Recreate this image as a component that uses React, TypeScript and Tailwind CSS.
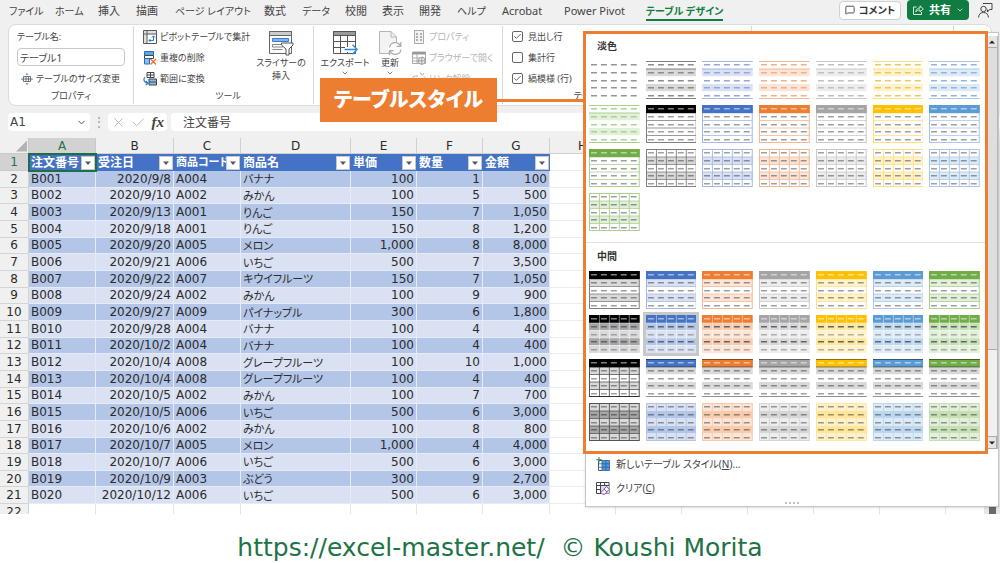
import { Check, ChevronDown, MessageSquare, X } from "lucide-react";
import type { ReactNode } from "react";

const tabs = [
  { name: "ファイル", style: "w-[46px] text-[10px]" },
  { name: "ホーム", style: "w-[43px] text-[10px]" },
  { name: "挿入", style: "w-[38px] text-[11px]" },
  { name: "描画", style: "w-[39px] text-[11px]" },
  { name: "ページ レイアウト", style: "w-[89px] text-[10px]" },
  { name: "数式", style: "w-[38px] text-[11px]" },
  { name: "データ", style: "w-[43px] text-[10px]" },
  { name: "校閲", style: "w-[37px] text-[11px]" },
  { name: "表示", style: "w-[37px] text-[11px]" },
  { name: "開発", style: "w-[38px] text-[11px]" },
  { name: "ヘルプ", style: "w-[45px] text-[10px]" },
  { name: "Acrobat", style: "w-[62px] text-[11px]" },
  { name: "Power Pivot", style: "w-[82px] text-[11px]" },
];

const columns = [
  { letter: "A", title: "注文番号", width: "w-[67px]" },
  { letter: "B", title: "受注日", width: "w-[78px]" },
  { letter: "C", title: "商品コード", width: "w-[67px]" },
  { letter: "D", title: "商品名", width: "w-[110px]" },
  { letter: "E", title: "単価", width: "w-[66px]" },
  { letter: "F", title: "数量", width: "w-[66px]" },
  { letter: "G", title: "金額", width: "w-[67px]" },
];

const emptyColumns = ["H", "I", "J", "K", "L", "M", "N"];

const orders = [
  ["B001", "2020/9/8", "A004", "バナナ", "100", "1", "100"],
  ["B002", "2020/9/10", "A002", "みかん", "100", "5", "500"],
  ["B003", "2020/9/13", "A001", "りんご", "150", "7", "1,050"],
  ["B004", "2020/9/18", "A001", "りんご", "150", "8", "1,200"],
  ["B005", "2020/9/20", "A005", "メロン", "1,000", "8", "8,000"],
  ["B006", "2020/9/21", "A006", "いちご", "500", "7", "3,500"],
  ["B007", "2020/9/22", "A007", "キウイフルーツ", "150", "7", "1,050"],
  ["B008", "2020/9/24", "A002", "みかん", "100", "9", "900"],
  ["B009", "2020/9/27", "A009", "パイナップル", "300", "6", "1,800"],
  ["B010", "2020/9/28", "A004", "バナナ", "100", "4", "400"],
  ["B011", "2020/10/2", "A004", "バナナ", "100", "4", "400"],
  ["B012", "2020/10/4", "A008", "グレープフルーツ", "100", "10", "1,000"],
  ["B013", "2020/10/4", "A008", "グレープフルーツ", "100", "4", "400"],
  ["B014", "2020/10/5", "A002", "みかん", "100", "7", "700"],
  ["B015", "2020/10/5", "A006", "いちご", "500", "6", "3,000"],
  ["B016", "2020/10/6", "A002", "みかん", "100", "8", "800"],
  ["B017", "2020/10/7", "A005", "メロン", "1,000", "4", "4,000"],
  ["B018", "2020/10/7", "A006", "いちご", "500", "6", "3,000"],
  ["B019", "2020/10/9", "A003", "ぶどう", "300", "9", "2,700"],
  ["B020", "2020/10/12", "A006", "いちご", "500", "6", "3,000"],
];

type Palette = { base: string; mid: string; light: string; line: string; dash: string };

const palettes: Palette[] = [
  { base: "#000000", mid: "#a6a6a6", light: "#d9d9d9", line: "#7f7f7f", dash: "#8c8c8c" },
  { base: "#4472c4", mid: "#b4c6e7", light: "#d9e1f2", line: "#a3b9e3", dash: "#93a9d6" },
  { base: "#ed7d31", mid: "#f8cbad", light: "#fce4d6", line: "#f5b792", dash: "#f0b08a" },
  { base: "#a5a5a5", mid: "#d6d6d6", light: "#ededed", line: "#c9c9c9", dash: "#c0c0c0" },
  { base: "#ffc000", mid: "#ffe699", light: "#fff2cc", line: "#ffdf80", dash: "#ecc95f" },
  { base: "#5b9bd5", mid: "#bdd7ee", light: "#ddebf7", line: "#a9c8ec", dash: "#94b4e0" },
  { base: "#70ad47", mid: "#c6e0b4", light: "#e2efda", line: "#a9d08e", dash: "#acd094" },
];

type Kind = "plain" | "lines" | "header" | "grid" | "banded" | "tiles" | "ruled" | "filled";

const repeat = (kind: Kind) => palettes.map((palette) => ({ kind, palette }));

const lightStyles = [
  { kind: "plain" as Kind, palette: palettes[0] },
  ...repeat("lines"),
  ...repeat("header"),
  ...repeat("grid"),
];

const mediumStyles = [
  ...repeat("banded"),
  ...repeat("tiles"),
  ...repeat("ruled"),
  ...repeat("filled"),
];

const rowTops = [0, 8, 15.5, 23, 30.5];
const rowHeights = [8, 7.5, 7.5, 7.5, 7.5];

const StyleThumb = ({ kind, palette }: { kind: Kind; palette: Palette }) => {
  const { base, mid, light, line, dash } = palette;
  const isBlack = base === "#000000";
  const hasHeader = ["header", "banded", "tiles", "ruled"].includes(kind);

  const fill = (row: number) => {
    const odd = row % 2 === 1;
    if (row === 0 && hasHeader) return base;
    if (kind === "plain" || kind === "header") return "#ffffff";
    if (kind === "ruled") return odd ? "#d9d9d9" : "#ffffff";
    if (kind === "tiles" || kind === "filled") return odd ? mid : light;
    return odd ? light : "#ffffff";
  };
  const dashColor = (row: number) => {
    if (row === 0 && hasHeader) return "#ffffff80";
    if (kind === "lines") return dash;
    if (kind === "tiles") return row % 2 === 1 ? "#5f6470" : "#00000045";
    return kind === "plain" ? "#959595" : "#00000060";
  };

  const horizontal = kind === "header" || kind === "grid" || kind === "banded";
  const vertical =
    kind === "grid" || kind === "tiles" || kind === "filled" || (kind === "ruled" && isBlack);
  const strong = isBlack && (kind === "ruled" || kind === "filled");
  const stroke = kind === "tiles" ? "#ffffff80" : strong ? "#555555" : kind === "filled" ? mid : line;

  return (
    <svg viewBox="0 0 51 38" preserveAspectRatio="none" className="block h-full w-full">
      {rowTops.map((top, row) => (
        <rect key={row} x="0" y={top} width="51" height={rowHeights[row]} fill={fill(row)} />
      ))}
      {(horizontal || kind === "tiles" || strong) &&
        rowTops.slice(1).map((top) => (
          <path key={top} d={`M0 ${top}H51`} stroke={stroke} strokeWidth="0.8" />
        ))}
      {vertical &&
        [10.5, 20.5, 30.5, 40.5].map((x) => (
          <path key={x} d={`M${x} 0V38`} stroke={stroke} strokeWidth="0.9" />
        ))}
      {(horizontal || kind === "filled" || strong) && (
        <rect x="0.5" y="0.5" width="50" height="37" fill="none" stroke={stroke} />
      )}
      {hasHeader && kind !== "tiles" && <rect width="51" height="8" fill={base} />}
      {kind === "lines" && <path d="M0 .5H51M0 8H51M0 37.5H51" stroke={line} />}
      {kind === "ruled" && <path d="M0 .5H51M0 8H51M0 37.5H51" stroke="#00000070" />}
      {rowTops.map((top, row) =>
        [2, 12, 22, 32, 42].map((x) => (
          <rect
            key={`${row}-${x}`}
            x={x}
            y={Math.round(top + 3)}
            width="6"
            height="1.5"
            fill={dashColor(row)}
          />
        ))
      )}
    </svg>
  );
};

const StyleSection = (props: {
  title: string;
  styles: { kind: Kind; palette: Palette }[];
  selected?: number;
}) => {
  const { title, styles, selected } = props;
  return (
    <section className="pt-[7px] pb-[11px] pl-[3px] pr-[6px]">
      <h2 className="pl-2 text-[10px] leading-3 font-bold text-[#333]">{title}</h2>
      <div className="mt-[9px] grid grid-cols-7 gap-[6px]">
        {styles.map((style, i) => (
          <button
            key={i}
            type="button"
            aria-label={`${title} ${i + 1}`}
            className={
              i === selected
                ? "h-[38px] outline-3 outline-[#c8c8c8]"
                : "h-[38px]"
            }
          >
            <StyleThumb kind={style.kind} palette={style.palette} />
          </button>
        ))}
      </div>
    </section>
  );
};

const ResizeIcon = () => (
  <svg viewBox="0 0 12 12" className="h-3 w-3 shrink-0" fill="none">
    <path d="M2.500 3.500h7v5h-7zM2.500 6h7M5 3.500v5M7.500 3.500v5" stroke="#555" strokeWidth=".8" />
    <path d="M6 0l1.500 1.800h-3zM6 12l1.500-1.800h-3zM0 6.200l1.600-1.400v2.800zM12 6.200l-1.600-1.400v2.800z" fill="#2b88d8" />
  </svg>
);

const PivotIcon = () => (
  <svg viewBox="0 0 14 14" className="h-[14px] w-[14px] shrink-0" fill="none">
    <path d="M.5.5h13v13H.5zM.5 4h13M4 .5v13" stroke="#555" />
    <path d="M.5.5h13V4H4v9.500H.5z" fill="#8884" />
    <path d="M6 10.500h4.500V6M8.800 7.500L10.500 5.800 12.200 7.500M7.500 9L6 10.500 7.500 12" stroke="#2b7cd3" />
  </svg>
);

const DuplicateIcon = () => (
  <svg viewBox="0 0 14 14" className="h-[14px] w-[14px] shrink-0" fill="none">
    <path d="M1.500.5h9v4h-9z" fill="#5ea3e6" stroke="#2b6cb0" />
    <path d="M1.500 4.500h9v3h-9z" fill="#fff" stroke="#444" />
    <path d="M1.500 7.500h5v5.500h-5z" fill="#8bbcec" stroke="#2b6cb0" />
    <path d="M7.500 8l5.500 5.500M13 8l-5.500 5.500" stroke="#ed6a2c" strokeWidth="1.2" />
  </svg>
);

const RangeIcon = () => (
  <svg viewBox="0 0 14 14" className="h-[14px] w-[14px] shrink-0" fill="none">
    <path d="M4 .5h7v5H4zM4 3h7M7.500.5v5" stroke="#444" />
    <path d="M6 7h7.500v6H6z" fill="#8bbcec" stroke="#444" />
    <path d="M6 10h7.500" stroke="#444" />
    <path d="M2 5C0 7.500 1 10.500 4.500 11.200M3 9l2 2.300-2.200 1.700" stroke="#2b7cd3" strokeWidth="1.2" />
  </svg>
);

const SlicerIcon = () => (
  <svg viewBox="0 0 26 26" className="h-[26px] w-[26px]" fill="none">
    <path d="M1.500 1.500h22v22h-22z" fill="#fafafa" stroke="#666" />
    <path d="M1.500 1.500h22v4h-22z" fill="#ccc" stroke="#666" />
    <path d="M4.500 8.500h16v3h-16z" fill="#7db4ea" stroke="#3b80c6" />
    <path d="M4.500 14.500h10v2.500h-10zM4.500 19.500h10" fill="#fff" stroke="#888" />
    <path d="M13.500 13h11.500v2l-4 4v6h-3v-6l-4.500-4z" fill="#fff" stroke="#555" />
  </svg>
);

const ExportIcon = () => (
  <svg viewBox="0 0 26 26" className="h-[26px] w-[26px]" fill="none">
    <path d="M1.500 1.500h22v22h-22z" fill="#fff" stroke="#555" />
    <path d="M1.500 1.500h22v4h-22z" fill="#9a9a9a" stroke="#555" />
    <path d="M1.500 11.500h22M1.500 17.500h22M8.500 5v18M15.500 5v18" stroke="#555" />
    <path d="M13 17h13v5H13z" fill="#fff" />
    <path d="M12.500 19.500H25M20.500 14.800l4.700 4.700-4.700 4.700" stroke="#2b88d8" strokeWidth="1.3" />
  </svg>
);

const RefreshIcon = () => (
  <svg viewBox="0 0 26 26" className="h-[26px] w-[26px]" fill="none">
    <path d="M2.500 1.500H14l5.500 5.500V23.500h-17z" fill="#f3f3f3" stroke="#b5b5b5" />
    <path d="M14 1.500v5.500h5.500" stroke="#b5b5b5" />
    <circle cx="18" cy="18.500" r="7" fill="#fff" />
    <path d="M12.500 17.500a5.800 5.800 0 0 1 11-1.500M24 19.500a5.800 5.800 0 0 1-11 1.500M23.800 12v4.300h-4.300M12.500 25v-4.300h4.300" stroke="#aaa" strokeWidth="1.2" />
  </svg>
);

const PropertyIcon = () => (
  <svg viewBox="0 0 14 14" className="h-[14px] w-[14px] shrink-0" fill="none">
    <path d="M2.500.5h9v13h-9z" fill="#f3f3f3" stroke="#aaa" />
    <path d="M4 4h2M8 4h2M4 7h2M8 7h2M4 10h2M8 10h2" stroke="#999" strokeWidth="1.5" />
  </svg>
);

const BrowserIcon = () => (
  <svg viewBox="0 0 14 14" className="h-[14px] w-[14px] shrink-0" fill="none">
    <path d="M.5 1h13v11.500H.5z" stroke="#aaa" />
    <path d="M.5 1h13v2.500H.5z" fill="#999" />
    <path d="M.5 7h7M.5 10h6M5 3v9.500" stroke="#aaa" />
    <circle cx="9.800" cy="9.800" r="3.500" fill="#eee" stroke="#999" />
    <path d="M6.300 9.800h7M9.800 6.300v7" stroke="#999" />
  </svg>
);

const UnlinkIcon = () => (
  <svg viewBox="0 0 14 14" className="h-[14px] w-[14px] shrink-0" fill="none">
    <path d="M6 4H3.500a3 3 0 0 0 0 6H6M8 10h2.500a3 3 0 0 0 1.500-5.500M8.500.5l1 2.500M12 1l-1.500 2.500" stroke="#aaa" />
  </svg>
);

const ShareIcon = () => (
  <svg viewBox="0 0 12 12" className="h-3 w-3" fill="none" stroke="#d9efe0">
    <path d="M4.500 3H1.500v7.500h8V8" />
    <path d="M3.800 7.800c.4-2.600 2-3.800 4.200-3.800V1.800L11.300 5 8 7.800V6C6 6 4.800 6.600 3.800 7.800z" />
  </svg>
);

const PresenceIcon = () => (
  <svg viewBox="0 0 16 16" className="h-4 w-4" fill="none" stroke="#444">
    <path d="M6 1.500h9v6h-2.500L10.500 10V7.500" />
    <circle cx="6.500" cy="7" r="2.700" fill="#f0f0f0" />
    <path d="M1.500 15.500c.3-3.300 2-5 5-5s4.700 1.700 5 5" />
  </svg>
);

const NewStyleIcon = () => (
  <svg viewBox="0 0 14 14" className="h-[14px] w-[14px] shrink-0" fill="none">
    <path d="M2.500 3.500h11v10h-11z" fill="#fff" stroke="#555" />
    <path d="M6 3.500h7.500v10H6z" fill="#4a9be8" />
    <path d="M2.500 6.800h11M2.500 10.200h11M6 3.500v10M9.800 3.500v10" stroke="#265f9c" strokeWidth=".8" />
    <path d="M3 0v5.500M.2 2.700h5.600" stroke="#2e8b57" />
  </svg>
);

const ClearIcon = () => (
  <svg viewBox="0 0 14 14" className="h-[14px] w-[14px] shrink-0" fill="none">
    <path d="M.5 1.500h12.500v11H.5zM.5 4.500H13M.5 8.500h8M4.500 1v11.500M8.500 1v6" stroke="#444" />
    <path d="M5 5h8v7.500H5z" fill="#cfe3f7" />
    <path d="M10.500 5.500l3 2.700-4.800 5H6.500L5 11.500zM8 8.200l3 2.700" fill="#fff" stroke="#8a4ba8" />
  </svg>
);

const ToolButton = (props: { icon: ReactNode; name: string; disabled?: boolean }) => (
  <button
    type="button"
    disabled={props.disabled}
    className="flex h-[21px] items-center gap-[3px] text-left text-[#444] disabled:text-[#b5b5b5]"
  >
    {props.icon}
    {props.name}
  </button>
);

const CheckOption = ({ name, checked }: { name: string; checked?: boolean }) => (
  <label className="flex h-[21px] items-center gap-[5px]">
    <span className="grid h-[11px] w-[11px] place-items-center">
      <input
        type="checkbox"
        defaultChecked={checked}
        className="peer col-start-1 row-start-1 h-[11px] w-[11px] appearance-none rounded-xs border border-[#666] bg-white"
      />
      <Check
        size={9}
        className="pointer-events-none invisible col-start-1 row-start-1 text-[#333] peer-checked:visible"
      />
    </span>
    {name}
  </label>
);

const RibbonGroup = (props: { title?: string; className: string; children: ReactNode }) => (
  <div className={`my-px flex shrink-0 flex-col justify-between border-r border-[#d9d9d9] pb-[2px] ${props.className}`}>
    <div className="flex">{props.children}</div>
    <div className="text-center leading-3">{props.title}</div>
  </div>
);

const Ribbon = () => (
  <div className="mx-2 flex h-[82px] overflow-hidden rounded-lg border border-[#dcdcdc] bg-white text-[9px] whitespace-nowrap text-[#444]">
    <RibbonGroup title="プロパティ" className="w-[125px] px-2">
      <div className="flex w-full flex-col">
        <label htmlFor="table-name" className="flex h-[22px] items-center">
          テーブル名:
        </label>
        <input
          id="table-name"
          defaultValue="テーブル1"
          className="h-[18px] w-full rounded-sm border border-[#c8c8c8] px-[2px] text-[10px]"
        />
        <div className="pt-[2px] pl-1">
          <ToolButton icon={<ResizeIcon />} name="テーブルのサイズ変更" />
        </div>
      </div>
    </RibbonGroup>
    <RibbonGroup title="ツール" className="w-[180px] pl-[9px]">
      <div className="flex w-[107px] flex-col">
        <ToolButton icon={<PivotIcon />} name="ピボットテーブルで集計" />
        <ToolButton icon={<DuplicateIcon />} name="重複の削除" />
        <ToolButton icon={<RangeIcon />} name="範囲に変換" />
      </div>
      <button type="button" className="flex w-[62px] flex-col items-center pt-1 leading-[13px]">
        <SlicerIcon />
        スライサーの
        <br />
        挿入
      </button>
    </RibbonGroup>
    <RibbonGroup className="w-[189px] pl-1">
      <button type="button" className="flex w-[54px] flex-col items-center pt-1 leading-[13px]">
        <ExportIcon />
        エクスポート
        <ChevronDown size={8} />
      </button>
      <button type="button" className="flex w-[36px] flex-col items-center pt-1 leading-[13px]">
        <RefreshIcon />
        更新
        <ChevronDown size={8} />
      </button>
      <div className="flex flex-col pl-1">
        <ToolButton icon={<PropertyIcon />} name="プロパティ" disabled />
        <ToolButton icon={<BrowserIcon />} name="ブラウザーで開く" disabled />
        <ToolButton icon={<UnlinkIcon />} name="リンク解除" disabled />
      </div>
    </RibbonGroup>
    <RibbonGroup title="テーブル スタイルのオプション" className="w-[249px] pl-[9px]">
      <div className="flex flex-col">
        <CheckOption name="見出し行" checked />
        <CheckOption name="集計行" />
        <CheckOption name="縞模様 (行)" checked />
      </div>
    </RibbonGroup>
    <RibbonGroup className="w-[202px]">{null}</RibbonGroup>
  </div>
);

const TitleTabs = () => (
  <header className="flex h-6 items-center pl-[9px] text-[11px] whitespace-nowrap text-[#444]">
    <nav className="flex flex-1">
      {tabs.map((tab) => (
        <a key={tab.name} href="#" className={`${tab.style} shrink-0 leading-4`}>
          {tab.name}
        </a>
      ))}
      <a href="#" className="border-b-2 border-[#107c41] text-[10px] leading-4 font-bold text-[#107c41]">
        テーブル デザイン
      </a>
    </nav>
    <div className="flex items-center pr-[7px] pb-1 text-[10px] font-bold">
      <button type="button" className="flex h-[19px] w-[62px] items-center justify-center gap-1 rounded-sm border border-[#d0d0d0] bg-white text-[#333]">
        <MessageSquare size={10} />
        コメント
      </button>
      <button type="button" className="ml-[6px] flex h-[20px] w-[62px] items-center justify-between rounded-sm bg-[#107c41] px-[5px] text-[11px] text-white">
        <ShareIcon />
        共有
        <ChevronDown size={8} />
      </button>
      <button type="button" aria-label="共同編集者" className="ml-2">
        <PresenceIcon />
      </button>
    </div>
  </header>
);

const FormulaBar = () => (
  <div className="mt-[7px] mb-[7px] flex h-[18px] items-center pl-2 text-[12px] text-[#444]">
    <div className="flex h-full w-[82px] items-center rounded-sm bg-white pr-[3px]">
      <input
        aria-label="名前ボックス"
        defaultValue="A1"
        className="w-full min-w-0 px-[2px] font-['DejaVu_Sans',sans-serif]"
      />
      <ChevronDown size={11} className="shrink-0" />
    </div>
    <span className="w-[18px] text-center text-[#999]">⋮</span>
    <div className="flex h-full w-[59px] items-center justify-between rounded-sm bg-white px-[3px]">
      <X size={15} strokeWidth={1.5} className="text-[#b4b4b4]" />
      <Check size={15} strokeWidth={1.5} className="text-[#b4b4b4]" />
      <span className="font-['Liberation_Serif',serif] text-[15px] leading-4 font-bold italic">fx</span>
    </div>
    <input
      aria-label="数式バー"
      defaultValue="注文番号"
      className="ml-1 h-full min-w-0 flex-1 rounded-sm bg-white px-3"
    />
  </div>
);

const Sheet = () => (
  <main className="flex h-[376px] overflow-hidden bg-white">
    <table className="h-[381px] w-full min-w-0 table-fixed border-separate border-spacing-0 font-['DejaVu_Sans','Noto_Sans_CJK_JP',sans-serif] text-[12px] leading-[14px] text-[#2b2b2b]">
      <colgroup>
        <col className="w-[29px]" />
        {columns.map((column) => (
          <col key={column.letter} className={column.width} />
        ))}
        {emptyColumns.map((letter) => (
          <col key={letter} className={letter === "N" ? "" : "w-[66px]"} />
        ))}
      </colgroup>
      <thead>
        <tr className="h-4 bg-[#f0f0f0]">
          <th className="border-r border-b border-[#c8c8c8] p-0" aria-label="すべて選択">
            <svg viewBox="0 0 12 12" className="ml-auto h-3 w-3 pr-px">
              <path d="M12 0v12H0z" fill="#b4b4b4" />
            </svg>
          </th>
          {columns.map((column, i) => (
            <th
              key={column.letter}
              className={
                i === 0
                  ? "border-r border-b border-[#c8c8c8] bg-[#d2d2d2] p-0 font-normal text-[#217346]"
                  : "border-r border-b border-[#d0d0d0] p-0 font-normal"
              }
            >
              {column.letter}
            </th>
          ))}
          {emptyColumns.map((letter) => (
            <th key={letter} className="border-r border-b border-[#d0d0d0] p-0 font-normal">
              {letter}
            </th>
          ))}
        </tr>
      </thead>
      <tbody>
        <tr className="h-[17px] bg-[#4472c4]">
          <th className="border-r border-b border-[#c8c8c8] bg-[#d2d2d2] p-0 font-normal text-[#217346]">1</th>
          {columns.map((column, i) => (
            <th
              key={column.letter}
              className={
                i === 0
                  ? "relative p-0 outline-2 -outline-offset-1 outline-[#1d7044]"
                  : "p-0"
              }
            >
              <div className="flex items-center pl-[2px] text-left font-bold whitespace-nowrap text-white">
                <span className={column.letter === "C" ? "min-w-0 flex-1 text-[11px]" : "min-w-0 flex-1"}>
                  {column.title}
                </span>
                <button
                  type="button"
                  aria-label={`${column.title} フィルター`}
                  className="mr-px grid h-[14px] w-[14px] shrink-0 place-items-center border border-[#c8c8c8] bg-white"
                >
                  <svg viewBox="0 0 6 4" className="h-1 w-[6px]">
                    <path d="M0 .5h6L3 4z" fill="#555" />
                  </svg>
                </button>
              </div>
            </th>
          ))}
          {emptyColumns.map((letter) => (
            <td key={letter} className="border-r border-b border-[#ececec] bg-white p-0" />
          ))}
        </tr>
        {orders.map((order, row) => (
          <tr key={order[0]} className={row % 2 === 0 ? "bg-[#b4c6e7]" : "bg-[#d9e1f2]"}>
            <th className="border-r border-b border-[#d4d4d4] bg-[#f0f0f0] p-0 font-normal">{row + 2}</th>
            {order.map((value, i) => (
              <td
                key={i}
                className={
                  i === 1 || i > 3
                    ? "border-r border-b border-[#e6ecf7] py-0 pr-[2px] pl-0 text-right"
                    : i === 3
                      ? "border-r border-b border-[#e6ecf7] pt-[2px] pr-0 pb-0 pl-[2px] text-[11px] leading-[13px]"
                      : "border-r border-b border-[#e6ecf7] py-0 pr-0 pl-[2px]"
                }
              >
                {value}
              </td>
            ))}
            {emptyColumns.map((letter) => (
              <td key={letter} className="border-r border-b border-[#ececec] bg-white p-0" />
            ))}
          </tr>
        ))}
        <tr>
          <th className="border-r border-[#d4d4d4] bg-[#f0f0f0] p-0 font-normal">22</th>
          {[...columns.map((column) => column.letter), ...emptyColumns].map((letter) => (
            <td key={letter} className="border-r border-[#e4e4e4] p-0" />
          ))}
        </tr>
      </tbody>
    </table>
    <div className="flex w-[15px] shrink-0 items-end justify-center bg-[#e8e8e8]">
      <div className="h-2 w-[7px] bg-[#6b6b6b]" />
    </div>
  </main>
);

const ScrollBar = () => (
  <div className="mt-[3px] mb-[3px] flex w-3 flex-col border-r border-[#b8b8b8] bg-[#f0f0f0]">
    <button type="button" aria-label="上へ" className="grid h-3 place-items-center border-b border-[#aaa] bg-[#e6e6e6]">
      <svg viewBox="0 0 6 4" className="h-1 w-[6px]">
        <path d="M0 3.500h6L3 .5z" fill="#222" />
      </svg>
    </button>
    <div className="h-[302px] border-b border-[#aaa] bg-[#dedede]" />
    <button type="button" aria-label="下へ" className="mt-auto grid h-[13px] place-items-center border border-[#aaa] bg-[#e6e6e6]">
      <svg viewBox="0 0 6 4" className="h-1 w-[6px]">
        <path d="M0 .5h6L3 3.500z" fill="#222" />
      </svg>
    </button>
  </div>
);

const StyleGallery = () => (
  <div className="absolute top-[32px] left-[585px] w-[414px] border border-[#c6c6c6] bg-white text-[10px] text-[#444] shadow-sm">
    <div className="relative flex">
      <div className="min-w-0 flex-1">
        <StyleSection title="淡色" styles={lightStyles} />
        <div className="border-t border-[#e1e1e1]" />
        <StyleSection title="中間" styles={mediumStyles} selected={8} />
      </div>
      <ScrollBar />
      <div className="pointer-events-none absolute -inset-y-[2px] right-[10px] -left-[3px] border-3 border-[#ed7d31]" />
    </div>
    <button type="button" className="flex h-6 w-full items-center gap-[6px] pl-[10px]">
      <NewStyleIcon />
      <span>
        新しいテーブル スタイル(<u>N</u>)...
      </span>
    </button>
    <button type="button" className="flex h-6 w-full items-center gap-[6px] pl-[10px]">
      <ClearIcon />
      <span>
        クリア(<u>C</u>)
      </span>
    </button>
    <div className="flex h-[6px] items-center justify-center gap-[2px]">
      <i className="h-[2px] w-[2px] bg-[#c0c4cc]" />
      <i className="h-[2px] w-[2px] bg-[#c0c4cc]" />
      <i className="h-[2px] w-[2px] bg-[#c0c4cc]" />
      <i className="h-[2px] w-[2px] bg-[#c0c4cc]" />
    </div>
  </div>
);

const Callout = () => (
  <div className="absolute top-[78px] left-[320px] flex w-[264px] items-center">
    <div className="flex h-[44px] w-[177px] shrink-0 items-center justify-center bg-[#ed7d31] text-[20px] font-black whitespace-nowrap text-white">
      テーブルスタイル
    </div>
    <div className="h-[3px] flex-1 bg-[#ed7d31]" />
  </div>
);

const App = () => {
  return (
    <div className="relative bg-white font-['Noto_Sans','Noto_Sans_CJK_JP',sans-serif] [font-feature-settings:'palt']">
      <div className="bg-[#f0f0f0]">
        <TitleTabs />
        <Ribbon />
        <FormulaBar />
        <Sheet />
      </div>
      <StyleGallery />
      <Callout />
      <footer className="pt-[18px] text-center font-['DejaVu_Sans',sans-serif] text-[25px] leading-8 whitespace-pre text-[#217346]">
        <a href="#">https://excel-master.net/</a>
        {"  © Koushi Morita"}
      </footer>
    </div>
  );
};

export default App;
